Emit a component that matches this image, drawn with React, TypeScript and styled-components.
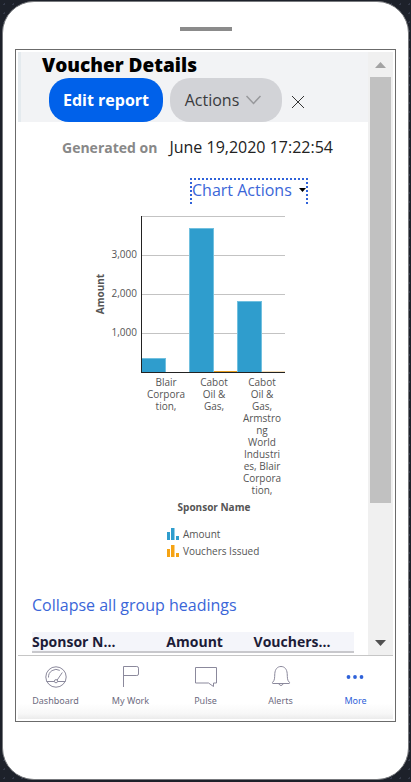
import React from "react";
import styled, { createGlobalStyle } from "styled-components";

const GlobalStyle = createGlobalStyle`
  * { box-sizing: border-box; }
  body {
    margin: 0;
    background-color: #1d212a;
    background-image: radial-gradient(#343948 1px, transparent 1px);
    background-size: 9px 9px;
    font-family: "Open Sans", "Noto Sans", sans-serif;
    color: #222;
  }
  button { font-family: inherit; border: 0; padding: 0; cursor: pointer; }
`;

const Page = styled.div`
  height: 100vh;
  padding: 1px 2px 2px;
`;

const Phone = styled.div`
  display: flex;
  flex-direction: column;
  height: 100%;
  padding: 25px 12px 57px;
  border: 1px solid #77797d;
  border-radius: 32px;
  background: #fff;
`;

const Speaker = styled.div`
  flex: none;
  align-self: center;
  width: 52px;
  height: 4px;
  margin-bottom: 18px;
  background: #8b8b8b;
`;

const Screen = styled.div`
  flex: 1;
  min-height: 0;
  display: flex;
  flex-direction: column;
  padding: 2px;
  border: 1px solid #6b6b6b;
`;

const Viewport = styled.div`
  flex: 1;
  min-height: 0;
  display: flex;
`;

const Content = styled.main`
  flex: 1;
  min-width: 0;
  overflow: hidden;
`;

const Header = styled.header`
  height: 70px;
  padding-left: 21px;
  border-left: 3px solid #e4eaee;
  background: #f2f3f5;
`;

const Title = styled.h1`
  margin: 0;
  font-size: 19px;
  line-height: 26px;
  font-weight: 800;
  color: #000;
`;

const HeaderButtons = styled.div`
  display: flex;
  align-items: center;
  padding-left: 7px;
`;

const Pill = styled.button<{ $primary?: boolean }>`
  display: flex;
  align-items: center;
  justify-content: center;
  gap: 7px;
  width: ${(p) => (p.$primary ? 114 : 112)}px;
  height: 44px;
  margin-right: 7px;
  padding-right: ${(p) => (p.$primary ? 0 : 6)}px;
  border-radius: 20px;
  font-size: 16px;
  font-weight: ${(p) => (p.$primary ? 700 : 400)};
  color: ${(p) => (p.$primary ? "#fff" : "#3a3b3e")};
  background: ${(p) => (p.$primary ? "#0061ea" : "#d2d3d7")};
`;

const CloseButton = styled.button`
  display: flex;
  margin: 4px 0 0 3px;
  background: none;
`;

const Generated = styled.dl`
  display: flex;
  align-items: baseline;
  gap: 12px;
  margin: 14px 0 0 44px;
  line-height: 22px;
  white-space: nowrap;
`;

const GeneratedLabel = styled.dt`
  font-size: 14px;
  font-weight: 700;
  color: #888;
`;

const GeneratedValue = styled.dd`
  margin: 0;
  font-size: 16px;
`;

const ChartActions = styled.button`
  display: flex;
  align-items: center;
  gap: 7px;
  height: 26px;
  margin: 19px 0 0 172px;
  padding-bottom: 4px;
  border: 2px dotted #2f62d9;
  border-bottom: 0;
  background: none;
  font-size: 16px;
  line-height: 20px;
  color: #3b66d8;
  white-space: nowrap;
`;

const Chart = styled.figure`
  width: 200px;
  margin: 6px 0 0 72px;
  font-size: 10px;
  color: #555;
`;

const Plot = styled.svg`
  display: block;
`;

const Categories = styled.ul`
  display: grid;
  grid-template-columns: repeat(3, 48px);
  margin: 0 0 0 52px;
  padding: 3px 0 0;
  list-style: none;
`;

const Category = styled.li`
  line-height: 12px;
  text-align: center;
  white-space: pre-line;
`;

const AxisTitle = styled.p`
  width: 148px;
  margin: 4px 0 10px 50px;
  line-height: 15px;
  font-weight: 700;
  text-align: center;
`;

const Legend = styled.ul`
  margin: 0;
  padding: 0 0 0 77px;
  list-style: none;
`;

const LegendItem = styled.li`
  display: flex;
  align-items: center;
  gap: 4px;
  height: 17px;
  white-space: nowrap;
`;

const CollapseLink = styled.a`
  display: block;
  margin: 35px 0 0 14px;
  font-size: 16px;
  line-height: 22px;
  color: #3b66d8;
  text-decoration: none;
`;

const Table = styled.table`
  width: calc(100% - 28px);
  margin: 16px 14px 0;
  border-collapse: collapse;
  table-layout: fixed;
  background: #f4f5fa;
`;

const HeadCell = styled.th<{ $width: string; $align?: string }>`
  width: ${(p) => p.$width};
  height: 20px;
  padding: 0;
  border-bottom: 2px solid #c8c8cc;
  font-size: 14px;
  line-height: 18px;
  font-weight: 700;
  text-align: ${(p) => p.$align || "left"};
  color: #1c1c38;
  white-space: nowrap;
`;

const Scrollbar = styled.div`
  display: flex;
  flex-direction: column;
  width: 25px;
  padding: 0 2px;
  background: #f0f0f0;
`;

const ScrollArrow = styled.button`
  flex: none;
  display: flex;
  align-items: center;
  justify-content: center;
  height: 25px;
  background: none;
`;

const ScrollTrack = styled.div`
  flex: 1;
`;

const ScrollThumb = styled.div`
  height: 77%;
  background: #c1c1c1;
`;

const TabBar = styled.nav`
  flex: none;
  display: grid;
  grid-template-columns: repeat(5, 1fr);
  height: 64px;
  border-top: 1px solid #c6c6c6;
  background: linear-gradient(#fff 75%, #f7f7f7 92%, #ebebeb);
`;

const Tab = styled.button<{ $active?: boolean }>`
  display: flex;
  flex-direction: column;
  align-items: center;
  gap: 5px;
  padding-top: 9px;
  background: none;
  font-family: "Noto Sans", sans-serif;
  font-size: 9px;
  line-height: 14px;
  color: ${(p) => (p.$active ? "#2f62d9" : "#6d6b80")};
`;

const bars = [
  { x: 51, top: 148, label: "Blair\nCorpora\ntion," },
  { x: 99, top: 18, label: "Cabot\nOil &\nGas," },
  {
    x: 147,
    top: 91,
    label: "Cabot\nOil &\nGas,\nArmstro\nng\nWorld\nIndustri\nes, Blair\nCorpora\ntion,",
  },
];

const ticks = [
  { y: 45, label: "3,000" },
  { y: 84, label: "2,000" },
  { y: 123, label: "1,000" },
];

function AmountChart() {
  return (
    <Plot width="200" height="163" viewBox="0 0 200 163" role="img" aria-label="Amount by sponsor name">
      <path d="M52 6.5H195M52 45.5H195M52 84.5H195M52 123.5H195" stroke="#c3c3c3" />
      {bars.map((b) => (
        <rect key={b.x} x={b.x + 0.5} y={b.top + 0.5} width="24" height={162 - b.top} fill="#2f9dcd" stroke="#71c0df" />
      ))}
      <path d="M51.5 6V163M51 162.5H195" stroke="#222" fill="none" />
      <path d="M124 161.5H147" stroke="#e59d1e" />
      <path d="M172 161.5H195" stroke="#f5dfb9" />
      <g fill="#555" fontSize="10">
        {ticks.map((t) => (
          <text key={t.y} x="47" y={t.y + 3} textAnchor="end">{t.label}</text>
        ))}
        <text transform="translate(14 84) rotate(-90)" textAnchor="middle" fontWeight="700">Amount</text>
      </g>
    </Plot>
  );
}

function LegendIcon({ color }: { color: string }) {
  return (
    <svg width="12" height="12" viewBox="0 0 12 12" fill={color} aria-hidden="true">
      <path d="M0 4H3V12H0ZM4 0H7.5V12H4ZM9 8H12V12H9Z" />
    </svg>
  );
}

const iconProps = {
  width: 24,
  height: 24,
  viewBox: "0 0 24 24",
  fill: "none",
  stroke: "#8b899c",
  strokeWidth: 1,
  "aria-hidden": true,
} as const;

const DashboardIcon = () => (
  <svg {...iconProps}>
    <circle cx="12" cy="12" r="10.2" />
    <path d="M2.5 16.5H10M14 16.5H21.5M13.2 15L18.3 7.5M4.5 12.5A7.6 7.6 0 0 1 15.8 5.4" />
    <circle cx="12" cy="16.2" r="1.6" />
  </svg>
);
const FlagIcon = () => (
  <svg {...iconProps}>
    <path d="M4.5 22V1.5H17.8Q19.5 1.5 19.5 3.2V9Q19.5 10.5 17.8 10.5H4.5" />
  </svg>
);
const PulseIcon = () => (
  <svg {...iconProps}>
    <path d="M1.5 2.5H22.5V18H19.5V21.5L14.5 18H1.5Z" />
  </svg>
);
const BellIcon = () => (
  <svg {...iconProps}>
    <path d="M3.5 17.5C6 15 5.5 13 5.8 8.5C6.2 4 8.5 1.5 12 1.5S17.8 4 18.2 8.5C18.5 13 18 15 20.5 17.5C21 18 20.5 18.5 20 18.5H4C3.5 18.5 3 18 3.5 17.5ZM9.5 18.5Q12 22.5 14.5 18.5" />
  </svg>
);
const MoreIcon = () => (
  <svg {...iconProps} stroke="none" fill="#2f62d9">
    <circle cx="4.5" cy="12" r="1.9" />
    <circle cx="11" cy="12" r="1.9" />
    <circle cx="17.5" cy="12" r="1.9" />
  </svg>
);

const tabs = [
  { label: "Dashboard", Icon: DashboardIcon },
  { label: "My Work", Icon: FlagIcon },
  { label: "Pulse", Icon: PulseIcon },
  { label: "Alerts", Icon: BellIcon },
  { label: "More", Icon: MoreIcon },
];

export default function App() {
  return (
    <Page>
      <GlobalStyle />
      <Phone>
        <Speaker />
        <Screen>
          <Viewport>
            <Content>
              <Header>
                <Title>Voucher Details</Title>
                <HeaderButtons>
                  <Pill $primary>Edit report</Pill>
                  <Pill>
                    Actions
                    <svg width="15" height="10" viewBox="0 0 15 10" fill="none" stroke="#97989b" strokeWidth="1.5" aria-hidden="true">
                      <path d="M0.5 1L7.5 8.5L14.5 1" />
                    </svg>
                  </Pill>
                  <CloseButton aria-label="Close">
                    <svg width="12" height="12" viewBox="0 0 12 12" stroke="#333" aria-hidden="true">
                      <path d="M0 0L12 12M12 0L0 12" />
                    </svg>
                  </CloseButton>
                </HeaderButtons>
              </Header>
              <Generated>
                <GeneratedLabel>Generated on</GeneratedLabel>
                <GeneratedValue>June 19,2020 17:22:54</GeneratedValue>
              </Generated>
              <ChartActions>
                Chart Actions
                <svg width="7" height="4" viewBox="0 0 7 4" aria-hidden="true">
                  <path d="M0 0H7L3.5 4Z" />
                </svg>
              </ChartActions>
              <Chart>
                <AmountChart />
                <Categories>
                  {bars.map((b) => (
                    <Category key={b.x}>{b.label}</Category>
                  ))}
                </Categories>
                <AxisTitle>Sponsor Name</AxisTitle>
                <Legend>
                  <LegendItem><LegendIcon color="#2f9dcd" />Amount</LegendItem>
                  <LegendItem><LegendIcon color="#f5a314" />Vouchers Issued</LegendItem>
                </Legend>
              </Chart>
              <CollapseLink href="#">Collapse all group headings</CollapseLink>
              <Table>
                <thead>
                  <tr>
                    <HeadCell $width="34%">Sponsor N...</HeadCell>
                    <HeadCell $width="25.3%" $align="right">Amount</HeadCell>
                    <HeadCell $width="33.4%" $align="right">Vouchers...</HeadCell>
                    <HeadCell $width="7.3%" aria-hidden="true" />
                  </tr>
                </thead>
              </Table>
            </Content>
            <Scrollbar>
              <ScrollArrow aria-label="Scroll up">
                <svg width="11" height="6" viewBox="0 0 11 6" fill="#a3a3a3"><path d="M0 6L5.5 0L11 6Z" /></svg>
              </ScrollArrow>
              <ScrollTrack><ScrollThumb /></ScrollTrack>
              <ScrollArrow aria-label="Scroll down">
                <svg width="11" height="6" viewBox="0 0 11 6" fill="#505050"><path d="M0 0H11L5.5 6Z" /></svg>
              </ScrollArrow>
            </Scrollbar>
          </Viewport>
          <TabBar>
            {tabs.map(({ label, Icon }) => (
              <Tab key={label} $active={label === "More"}>
                <Icon />
                {label}
              </Tab>
            ))}
          </TabBar>
        </Screen>
      </Phone>
    </Page>
  );
}
